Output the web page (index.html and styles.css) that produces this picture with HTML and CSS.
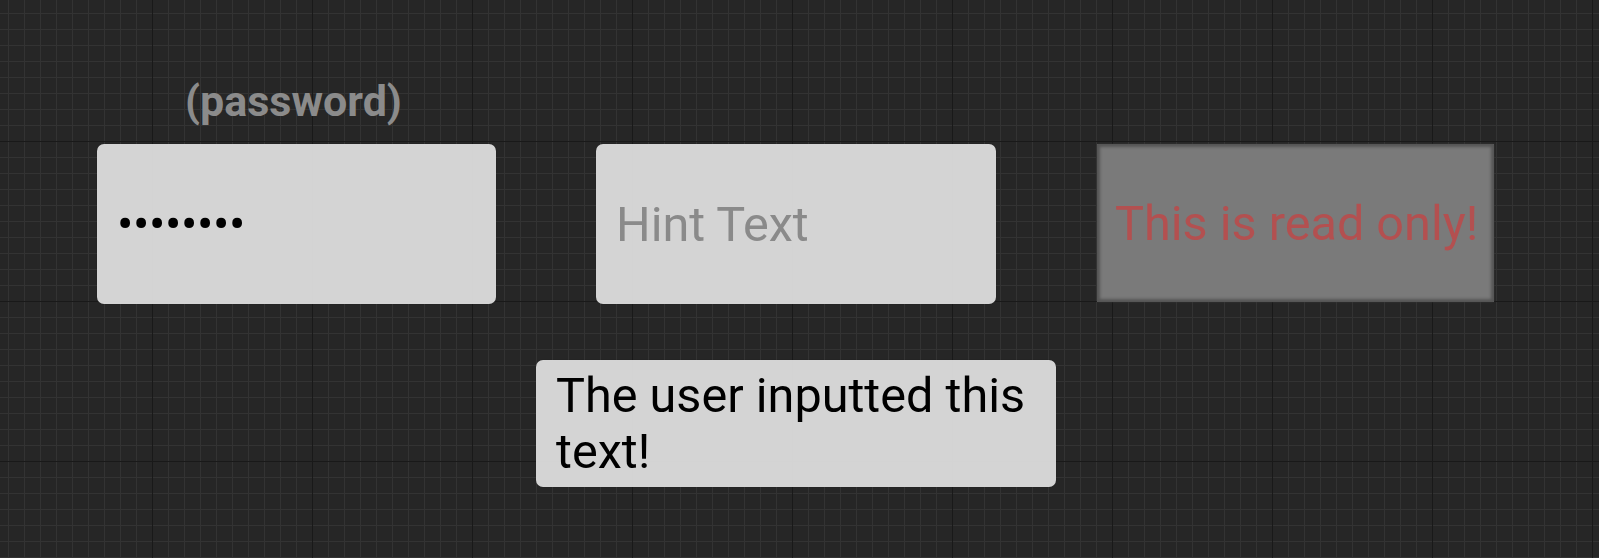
FILE: index.html
```html
<!DOCTYPE html>
<html lang="en">
<head>
<meta charset="utf-8">
<title>Editable text widgets</title>
<link rel="stylesheet" href="styles.css">
</head>
<body>
<main class="canvas">
  <div class="row row-top">
    <div class="field-col">
      <div class="label">(password)</div>
      <div class="box box-password">••••••••</div>
    </div>
    <div class="box box-hint">Hint Text</div>
    <div class="box box-readonly">This is read only!</div>
  </div>
  <div class="row row-bottom">
    <div class="box box-multi">The user inputted this text!</div>
  </div>
</main>
</body>
</html>
```

FILE: styles.css
```css
html, body {
  margin: 0;
  padding: 0;
}

body {
  width: 1599px;
  height: 558px;
  overflow: hidden;
  background-color: #262626;
  background-image:
    linear-gradient(to right, #191919 0, #191919 1px, transparent 1px),
    linear-gradient(to bottom, #191919 0, #191919 1px, transparent 1px),
    linear-gradient(to right, #333333 0, #333333 1px, transparent 1px),
    linear-gradient(to bottom, #333333 0, #333333 1px, transparent 1px);
  background-size: 160px 160px, 160px 160px, 16px 16px, 16px 16px;
  background-position: 152px 0, 0 141px, 8px 0, 0 13px;
  font-family: Roboto, "Liberation Sans", sans-serif;
}

.canvas {
  padding: 76px 0 0 97px;
  display: flex;
  flex-direction: column;
}

.row {
  display: flex;
}

.row-top {
  align-items: flex-end;
}

.row-bottom {
  margin-top: 56px;
  padding-left: 439px;
}

.field-col {
  display: flex;
  flex-direction: column;
}

.label {
  font-weight: 700;
  font-size: 43px;
  line-height: 50px;
  height: 50px;
  margin-bottom: 18px;
  color: #8b8b8b;
  text-align: center;
  padding-right: 6px;
}

.box {
  box-sizing: border-box;
  width: 400px;
  height: 160px;
  display: flex;
  align-items: center;
  font-size: 48.6px;
  border-radius: 7px;
  background: rgba(221, 221, 221, 0.95);
  box-shadow: 0 0 1px rgba(0, 0, 0, 0.4);
}

.box-password {
  width: 399px;
  padding-left: 20px;
  letter-spacing: -0.4px;
  color: #000000;
}

.box-hint {
  margin-left: 100px;
  padding-left: 20px;
  color: #8a8a8a;
}

.box-readonly {
  width: 397px;
  height: 158px;
  margin-left: 101px;
  margin-bottom: 2px;
  padding-left: 18px;
  border-radius: 1px;
  background: #7a7a7a;
  box-shadow: inset 0 0 3px 3px #555555, 0 0 2px #3a3a3a;
  color: #b35050;
  white-space: nowrap;
}

.box-multi {
  width: 520px;
  height: 127px;
  padding: 0 4px 0 20px;
  line-height: 56px;
  color: #000000;
}
```
